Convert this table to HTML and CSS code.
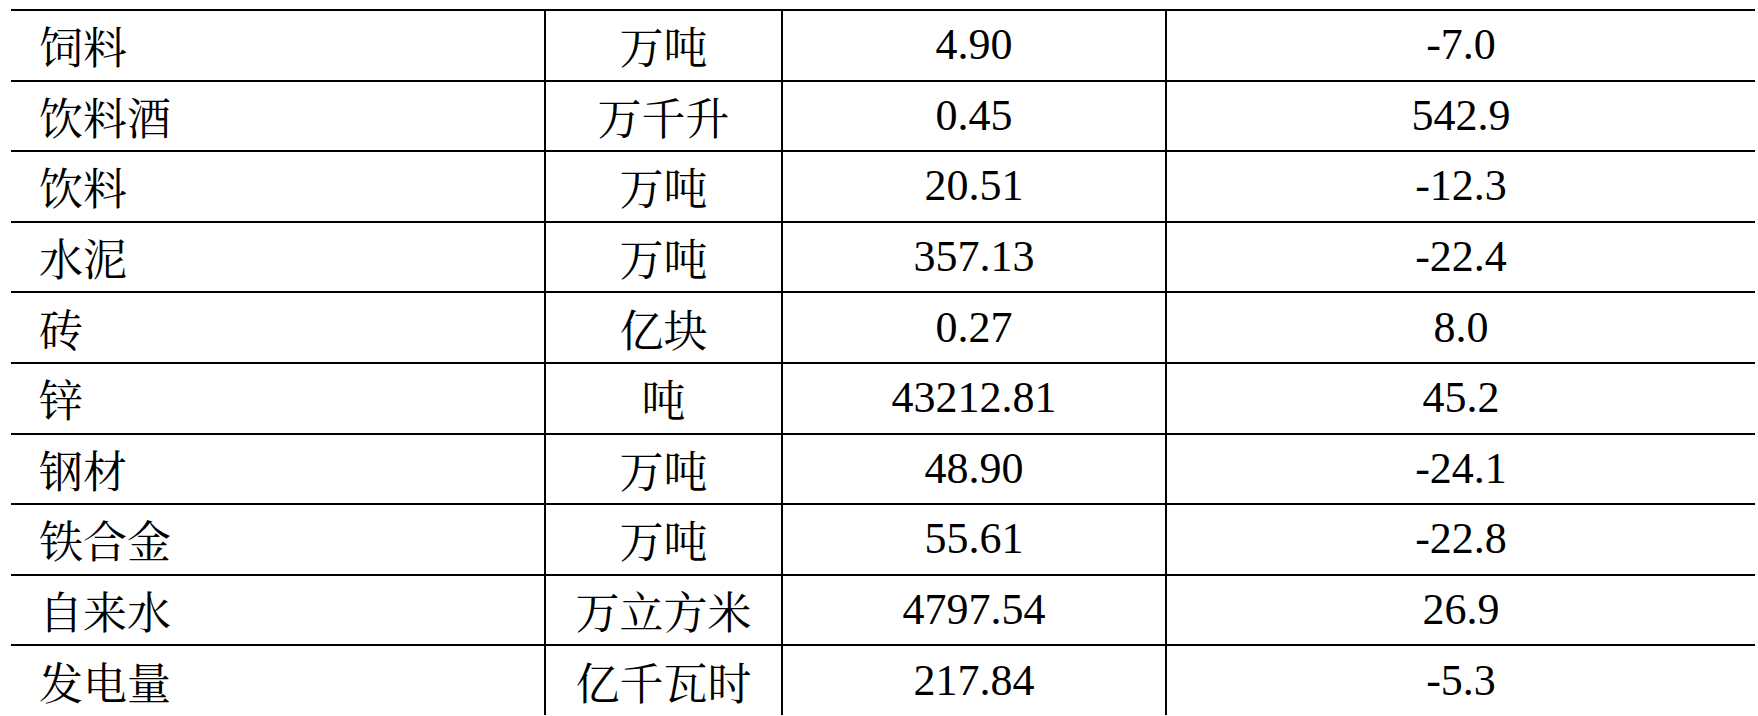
FILE: index.html
```html
<!DOCTYPE html>
<html lang="en">
<head>
<meta charset="utf-8">
<title>Industrial output</title>
<link rel="stylesheet" href="styles.css">
</head>
<body>
<div class="stats">
  <div class="row"><div class="cell name">饲料</div><div class="cell unit">万吨</div><div class="cell num">4.90</div><div class="cell num">-7.0</div></div>
  <div class="row"><div class="cell name">饮料酒</div><div class="cell unit">万千升</div><div class="cell num">0.45</div><div class="cell num">542.9</div></div>
  <div class="row"><div class="cell name">饮料</div><div class="cell unit">万吨</div><div class="cell num">20.51</div><div class="cell num">-12.3</div></div>
  <div class="row"><div class="cell name">水泥</div><div class="cell unit">万吨</div><div class="cell num">357.13</div><div class="cell num">-22.4</div></div>
  <div class="row"><div class="cell name">砖</div><div class="cell unit">亿块</div><div class="cell num">0.27</div><div class="cell num">8.0</div></div>
  <div class="row"><div class="cell name">锌</div><div class="cell unit">吨</div><div class="cell num">43212.81</div><div class="cell num">45.2</div></div>
  <div class="row"><div class="cell name">钢材</div><div class="cell unit">万吨</div><div class="cell num">48.90</div><div class="cell num">-24.1</div></div>
  <div class="row"><div class="cell name">铁合金</div><div class="cell unit">万吨</div><div class="cell num">55.61</div><div class="cell num">-22.8</div></div>
  <div class="row"><div class="cell name">自来水</div><div class="cell unit">万立方米</div><div class="cell num">4797.54</div><div class="cell num">26.9</div></div>
  <div class="row"><div class="cell name">发电量</div><div class="cell unit">亿千瓦时</div><div class="cell num">217.84</div><div class="cell num">-5.3</div></div>
</div>
</body>
</html>
```
FILE: styles.css
```css
body {
  margin: 0;
  background: #ffffff;
  color: #000;
  font-family: "Liberation Serif", "Noto Serif CJK SC", serif;
  font-size: 44px;
}

.stats {
  width: 1744px;
  margin: 9px 0 0 11px;
  display: flex;
  flex-direction: column;
}

.row {
  display: grid;
  grid-template-columns: 533px 237px 384px 590px;
  height: 70.6px;
  border-top: 2px solid #000;
  box-sizing: border-box;
}

.cell {
  display: flex;
  align-items: center;
  justify-content: center;
  line-height: 1;
  white-space: nowrap;
}

.cell + .cell {
  border-left: 2px solid #000;
}

.num {
  font-family: "Liberation Serif", serif;
}

.name {
  justify-content: flex-start;
  padding-left: 28px;
}

.name,
.unit {
  font-family: "Noto Serif CJK SC", serif;
}
```
